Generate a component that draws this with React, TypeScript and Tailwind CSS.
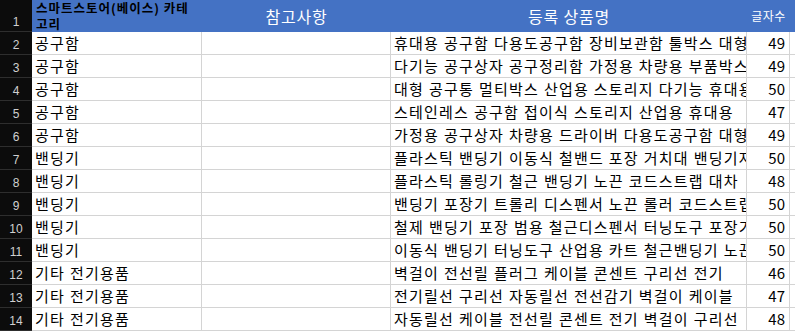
const rows = [
  { cat: '공구함', name: '휴대용 공구함 다용도공구함 장비보관함 툴박스 대형', count: 49 },
  { cat: '공구함', name: '다기능 공구상자 공구정리함 가정용 차량용 부품박스', count: 49 },
  { cat: '공구함', name: '대형 공구통 멀티박스 산업용 스토리지 다기능 휴대용', count: 50 },
  { cat: '공구함', name: '스테인레스 공구함 접이식 스토리지 산업용 휴대용', count: 47 },
  { cat: '공구함', name: '가정용 공구상자 차량용 드라이버 다용도공구함 대형', count: 49 },
  { cat: '밴딩기', name: '플라스틱 밴딩기 이동식 철밴드 포장 거치대 밴딩기자재', count: 50 },
  { cat: '밴딩기', name: '플라스틱 롤링기 철근 밴딩기 노끈 코드스트랩 대차', count: 48 },
  { cat: '밴딩기', name: '밴딩기 포장기 트롤리 디스펜서 노끈 롤러 코드스트랩', count: 50 },
  { cat: '밴딩기', name: '철제 밴딩기 포장 범용 철근디스펜서 터닝도구 포장기', count: 50 },
  { cat: '밴딩기', name: '이동식 밴딩기 터닝도구 산업용 카트 철근밴딩기 노끈', count: 50 },
  { cat: '기타 전기용품', name: '벽걸이 전선릴 플러그 케이블 콘센트 구리선 전기', count: 46 },
  { cat: '기타 전기용품', name: '전기릴선 구리선 자동릴선 전선감기 벽걸이 케이블', count: 47 },
  { cat: '기타 전기용품', name: '자동릴선 케이블 전선릴 콘센트 전기 벽걸이 구리선', count: 48 },
];

const font = "font-['Noto_Sans_CJK_KR','Noto_Sans',sans-serif]";

export default function App() {
  return (
    <div className={`w-[795px] h-[334px] overflow-hidden bg-white ${font}`}>
      {/* header row */}
      <div className="flex h-[32px] bg-[#4472c4]">
        <div className="w-[32px] shrink-0 bg-[#0c0c0c] border-b border-[#2e2e2e] flex items-end justify-center pb-[3px] text-[12px] leading-none text-[#d0d0d0] font-['Liberation_Sans',sans-serif]">
          1
        </div>
        <div className="w-[170px] shrink-0 flex items-center pl-[4px]">
          <span className="w-[160px] text-[12.5px] leading-[16px] tracking-[1px] font-bold text-black">
            스마트스토어(베이스) 카테고리
          </span>
        </div>
        <div className="w-[189px] shrink-0 flex items-center justify-center text-[16px] tracking-[0.8px] text-white">
          참고사항
        </div>
        <div className="w-[356px] shrink-0 flex items-center justify-center text-[16px] tracking-[0.8px] text-white">
          등록 상품명
        </div>
        <div className="w-[43px] shrink-0 flex items-center justify-center text-[12px] tracking-[0.5px] text-white">
          글자수
        </div>
        <div className="flex-1" />
      </div>

      {rows.map((r, i) => (
        <div key={i} className="flex h-[23px] text-[15px] text-black">
          <div className="w-[32px] shrink-0 bg-[#0c0c0c] border-b border-[#2e2e2e] flex items-end justify-center pb-[3px] text-[12px] leading-none text-[#d0d0d0] font-['Liberation_Sans',sans-serif]">
            {i + 2}
          </div>
          <div className="w-[170px] shrink-0 border-r border-b border-[#d4d4d4] flex items-end pl-[3px] pb-[1px] leading-[20px] tracking-[1.2px] [word-spacing:0.4px] whitespace-nowrap overflow-hidden">
            {r.cat}
          </div>
          <div className="w-[189px] shrink-0 border-r border-b border-[#d4d4d4]" />
          <div className="w-[356px] shrink-0 border-r border-b border-[#d4d4d4] flex items-end pl-[3px] pb-[1px] leading-[20px] tracking-[1.2px] [word-spacing:0.4px] whitespace-nowrap overflow-hidden">
            {r.name}
          </div>
          <div className="w-[43px] shrink-0 border-r border-b border-[#d4d4d4] flex items-end justify-end pr-[4px] pb-[1px] leading-[20px]">
            {r.count}
          </div>
          <div className="flex-1 border-b border-[#d4d4d4]" />
        </div>
      ))}
    </div>
  );
}
